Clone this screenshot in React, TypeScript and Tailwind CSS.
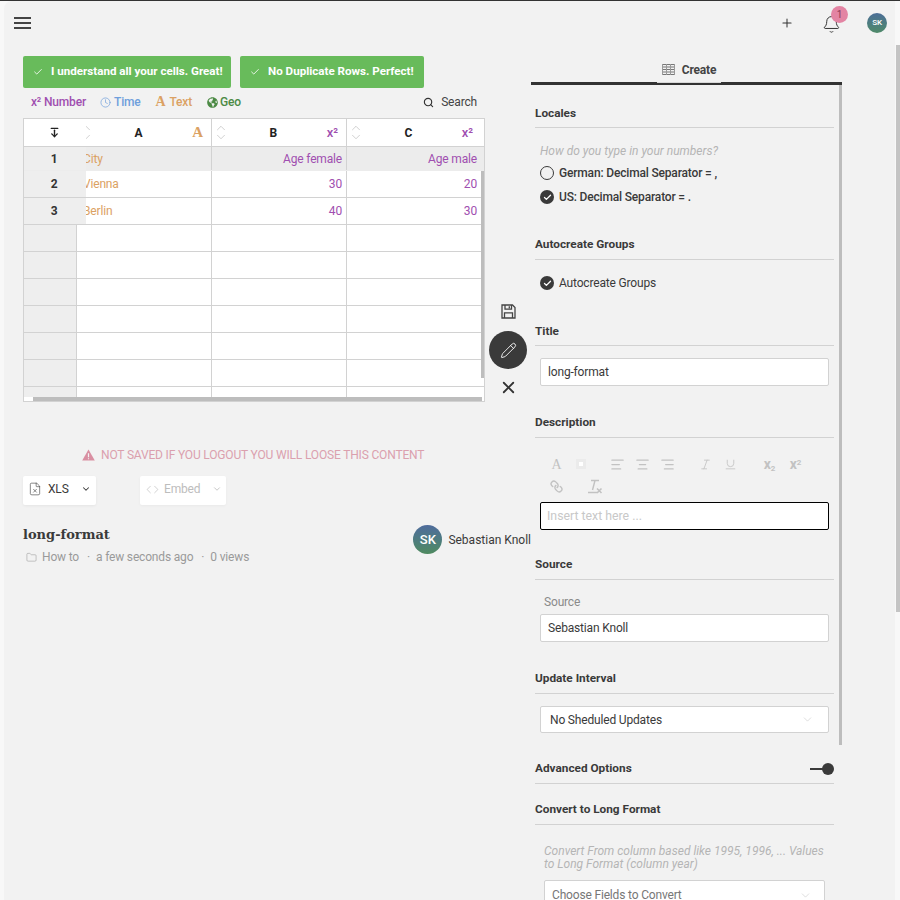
import {
  ArrowDownFromLine,
  Bell,
  Check,
  ChevronDown,
  ChevronUp,
  Clock,
  Code,
  FileX,
  Folder,
  AlignCenter,
  AlignLeft,
  AlignRight,
  Italic,
  Link,
  Pencil,
  Plus,
  Search,
  Underline,
  X,
} from "lucide-react";
import { FaGlobeAmericas } from "react-icons/fa";
import type { ReactNode } from "react";

const blankRows = [0, 1, 2, 3, 4, 5, 6];

function SerifA({ className }: { className: string }) {
  return <span className={`font-['Liberation_Serif',serif] font-bold ${className}`}>A</span>;
}

function Sq() {
  return <span className="text-[13px] font-medium">x²</span>;
}

function SortIcon({ className = "" }: { className?: string }) {
  return (
    <div className={`flex flex-col text-[#b0b0b0] ${className}`}>
      <ChevronUp size={14} strokeWidth={1} className="-mb-[5px]" />
      <ChevronDown size={14} strokeWidth={1} />
    </div>
  );
}

function Heading({ children, className = "" }: { children: ReactNode; className?: string }) {
  return (
    <div className={`h-[23px] w-[299px] border-b border-[#d2d2d2] text-[11.8px] leading-[15px] font-bold tracking-normal text-[#3a3a3a] ${className}`}>
      {children}
    </div>
  );
}

function Tick() {
  return (
    <span className="flex h-[14px] w-[14px] items-center justify-center rounded-full bg-[#3a3a3a] text-white">
      <Check size={9} strokeWidth={3.5} />
    </span>
  );
}

function ToolSlot({ children, className = "" }: { children: ReactNode; className?: string }) {
  return <span className={`flex w-[25px] items-center justify-center text-[#c2c2c2] ${className}`}>{children}</span>;
}

function GridIcon() {
  return (
    <svg width="13" height="12" viewBox="0 0 13 12" fill="none" stroke="#777" strokeWidth="1">
      <path d="M0 .5h13M0 3h13M0 5.5h13M0 8h13M0 10.5h13" />
      <path d="M.5 0v11M4.5 0v11M8.5 0v11M12.5 0v11" stroke="#999" />
    </svg>
  );
}

function ClearFormat() {
  return (
    <svg width="16" height="15" viewBox="0 0 16 15" fill="none" stroke="#c2c2c2" strokeWidth="1.4">
      <path d="M4 1.5h8M8 1.5 5.5 11M1 13.5h9" />
      <path d="M10 9.5l4.5 4.5M14.5 9.5 10 14" strokeWidth="1.6" />
    </svg>
  );
}

function WarnIcon() {
  return (
    <svg width="13" height="12" viewBox="0 0 13 12">
      <path d="M6.5.5 12.8 11.5H.2z" fill="#d98fa2" />
      <path d="M6.5 4.2v4M6.5 9.2v1.1" stroke="#f2f2f2" strokeWidth="1.2" />
    </svg>
  );
}

function SaveIcon() {
  return (
    <svg width="15" height="15" viewBox="0 0 15 15" fill="none" stroke="#444" strokeWidth="1.3">
      <path d="M1 1h10.5L14 3.5V14H1z" />
      <path d="M4 1v4.2h6.5V1M8.3 2.2v2" />
      <path d="M3.5 14V8.8h8V14" />
    </svg>
  );
}

export default function App() {
  return (
    <div className="relative h-[900px] w-[900px] overflow-hidden bg-[#f8f8f8] font-['Roboto',sans-serif] text-[12px] tracking-[-0.17px] text-[#3a3a3a]">
      <div className="h-px bg-[#333]" />
      <div className="ml-[4px] w-[891px] rounded-tl-[8px] bg-[#f2f2f2]">
        {/* top bar */}
        <header className="flex h-[44px] items-center pl-[10px]">
          <div className="flex w-[17px] flex-col gap-[3px]">
            <span className="h-[2px] bg-[#444]" />
            <span className="h-[2px] bg-[#444]" />
            <span className="h-[2px] bg-[#444]" />
          </div>
          <Plus size={14} strokeWidth={1.75} className="ml-[749px] text-[#333]" />
          <div className="relative ml-[28px] mr-[30px] mt-[2px]">
            <Bell size={19} strokeWidth={1.25} className="text-[#333]" />
            <span className="absolute -right-[7px] -top-[9px] flex h-[17px] w-[17px] items-center justify-center rounded-full bg-[#e384a3] text-[10px] text-[#8a3d58]">
              1
            </span>
          </div>
          <span className="-ml-[4px] flex h-[20px] w-[20px] items-center justify-center rounded-full bg-gradient-to-b from-[#4c6d96] to-[#4f8a68] text-[8px] font-medium text-white">
            SK
          </span>
        </header>

        <div className="flex h-[855px] overflow-hidden">
          {/* left column */}
          <main className="w-[527px] shrink-0 pl-[19px]">
            <div className="mt-[11px] flex gap-[9px] text-[11.6px] font-bold tracking-normal text-white">
              <div className="flex h-[32px] w-[208px] items-center gap-[8px] rounded-[2px] bg-[#68bb5b] pl-[10px]">
                <Check size={10} strokeWidth={2} />
                <span>I understand all your cells. Great!</span>
              </div>
              <div className="flex h-[32px] w-[184px] items-center gap-[8px] rounded-[2px] bg-[#68bb5b] pl-[10px]">
                <Check size={10} strokeWidth={2} />
                <span>No Duplicate Rows. Perfect!</span>
              </div>
            </div>

            <div className="-mt-px flex h-[30px] items-center pl-[8px] pr-[54px] font-medium">
              <span className="text-[#a04fb0]">x² Number</span>
              <span className="ml-[14px] flex items-center gap-[3px] text-[#6f9fdc]">
                <Clock size={11} strokeWidth={1.5} />
                Time
              </span>
              <span className="ml-[15px] flex items-center gap-[4px] text-[#dba163]">
                <SerifA className="text-[14px] leading-none" />
                Text
              </span>
              <span className="ml-[15px] flex items-center gap-[2px] text-[#4c8a45]">
                <FaGlobeAmericas size={11} />
                Geo
              </span>
              <Search size={11} strokeWidth={2.5} className="ml-auto text-[#333]" />
              <span className="ml-[7px] font-normal text-[#444]">Search</span>
            </div>

            <div className="mt-px flex">
              {/* sheet */}
              <div className="relative h-[284px] w-[462px] overflow-hidden border border-[#d2d2d2] bg-white">
                <div className="flex h-[28px] border-b border-[#d2d2d2] font-bold tracking-normal text-[#222]">
                  <div className="flex w-[62px] items-center justify-center pr-[2px]">
                    <ArrowDownFromLine size={11} strokeWidth={3} />
                  </div>
                  <div className="flex w-[126px] items-center overflow-hidden border-r border-[#d2d2d2] pr-[8px]">
                    <SortIcon className="-ml-[7px]" />
                    <span className="flex-1 pr-[8px] text-center">A</span>
                    <SerifA className="text-[15px] text-[#dba163]" />
                  </div>
                  <div className="flex w-[135px] items-center border-r border-[#d2d2d2] pl-[2px] pr-[8px]">
                    <SortIcon />
                    <span className="flex-1 pr-[8px] text-center">B</span>
                    <span className="text-[#a04fb0]"><Sq /></span>
                  </div>
                  <div className="flex w-[134px] items-center pl-[2px] pr-[8px]">
                    <SortIcon />
                    <span className="flex-1 pr-[8px] text-center">C</span>
                    <span className="text-[#a04fb0]"><Sq /></span>
                  </div>
                </div>
                {[
                  ["1", "City", "Age female", "Age male", "bg-[#ececec]", "h-[24px] border-[#ececec]"],
                  ["2", "Vienna", "30", "20", "bg-white", "h-[27px] border-[#d2d2d2]"],
                  ["3", "Berlin", "40", "30", "bg-white", "h-[27px] border-[#d2d2d2]"],
                ].map(([n, a, b, c, bg, h]) => (
                  <div key={n} className={`flex border-b ${bg} ${h}`}>
                    <div className="flex w-[62px] items-center justify-center bg-[#eeeeee] pr-[2px] font-bold text-[#333]">{n}</div>
                    <div className="flex w-[126px] items-center overflow-hidden border-r border-[#d2d2d2] text-[#dba163]">
                      <span className="-ml-[3px] whitespace-nowrap">{a}</span>
                    </div>
                    <div className="flex w-[135px] items-center justify-end border-r border-[#d2d2d2] pr-[4px] text-[#a04fb0]">{b}</div>
                    <div className="flex w-[134px] items-center justify-end pr-[4px] text-[#a04fb0]">{c}</div>
                  </div>
                ))}
                {blankRows.map((r) => (
                  <div key={r} className="flex h-[27px] border-b border-[#d2d2d2]">
                    <div className="w-[53px] border-r border-[#d2d2d2] bg-[#eeeeee]" />
                    <div className="w-[135px] border-r border-[#d2d2d2]" />
                    <div className="w-[135px] border-r border-[#d2d2d2]" />
                    <div className="w-[134px]" />
                  </div>
                ))}
                {/* scrollbars */}
                <div className="absolute right-0 top-[52px] h-[207px] w-[3px] bg-[#bdbdbd]" />
                <div className="absolute bottom-0 left-0 h-[4px] w-full bg-white" />
                <div className="absolute bottom-0 left-[9px] h-[4px] w-[449px] bg-[#bdbdbd]" />
              </div>

              {/* sheet actions */}
              <div className="flex w-[46px] flex-col items-center justify-end pb-[5px]">
                <SaveIcon />
                <span className="mt-[12px] flex h-[38px] w-[38px] items-center justify-center rounded-full bg-[#3a3a3a] text-white">
                  <Pencil size={17} strokeWidth={1.25} />
                </span>
                <X size={19} strokeWidth={2.25} className="mt-[9px] text-[#333]" />
              </div>
            </div>

            <div className="ml-[59px] mt-[44px] flex h-[18px] items-center gap-[6px] text-[#dba0ae]">
              <WarnIcon />
              <span>NOT SAVED IF YOU LOGOUT YOU WILL LOOSE THIS CONTENT</span>
            </div>

            <div className="mt-[12px] flex">
              <div className="flex h-[29px] w-[73px] items-center rounded-[2px] bg-white pb-[3px] pl-[5px] shadow-[0_1px_3px_rgba(0,0,0,0.06)]">
                <FileX size={14} strokeWidth={1} className="text-[#333]" />
                <span className="ml-[6px]">XLS</span>
                <ChevronDown size={10} strokeWidth={2.5} className="ml-[12px]" />
              </div>
              <div className="ml-[44px] flex h-[29px] w-[86px] items-center rounded-[2px] bg-white pb-[3px] pl-[6px] text-[#bdbdbd] shadow-[0_1px_3px_rgba(0,0,0,0.04)]">
                <Code size={13} strokeWidth={1.25} />
                <span className="ml-[5px]">Embed</span>
                <ChevronDown size={10} strokeWidth={2} className="ml-[12px]" />
              </div>
            </div>

            <div className="mt-[16px] flex w-[508px] justify-between">
              <div>
                <h1 className="pt-px font-['DejaVu_Serif',serif] text-[13px] leading-[26px] font-bold tracking-normal text-[#3a3a3a]">long-format</h1>
                <div className="flex items-center pl-[3px] text-[#9a9a9a]">
                  <Folder size={11} strokeWidth={1.25} />
                  <span className="ml-[5px]">How to</span>
                  <span className="ml-[8px]">·</span>
                  <span className="ml-[6px]">a few seconds ago</span>
                  <span className="ml-[8px]">·</span>
                  <span className="ml-[6px]">0 views</span>
                </div>
              </div>
              <div className="mt-[4px] flex h-[29px] items-center gap-[6px] tracking-normal">
                <span className="flex h-[29px] w-[29px] items-center justify-center rounded-full bg-gradient-to-b from-[#4f6b9c] to-[#4f8a5f] text-[13px] font-medium text-white">SK</span>
                <span className="whitespace-nowrap">Sebastian Knoll</span>
              </div>
            </div>
          </main>

          {/* right panel */}
          <aside className="relative w-[311px] shrink-0">
            <div className="mt-[15px] flex h-[22px] justify-center">
              <div className="ml-[5px] flex h-[23px] w-[64px] items-center justify-center gap-[7px] border-b border-[#d8d8d8] pb-[3px] font-bold text-[#444]">
                <GridIcon />
                Create
              </div>
            </div>
            <div className="h-[3px] bg-[#333]" />
            <div className="absolute right-0 top-[40px] h-[660px] w-[3px] bg-[#bdbdbd]" />

            <div className="pl-[4px]">
              <Heading className="mt-[20px] pt-px">Locales</Heading>
              <p className="ml-[5px] mt-[15px] leading-[16px] tracking-normal text-[#b5b5b5] italic">How do you type in your numbers?</p>
              <div className="ml-[5px] mt-[2px] flex h-[24px] items-center gap-[5px] font-medium">
                <span className="h-[14px] w-[14px] rounded-full border border-[#3a3a3a]" />
                German: Decimal Separator = ,
              </div>
              <div className="ml-[5px] flex h-[24px] items-center gap-[5px] font-medium">
                <Tick />
                US: Decimal Separator = .
              </div>

              <Heading className="mt-[28px]">Autocreate Groups</Heading>
              <div className="ml-[5px] mt-[11px] flex h-[24px] items-center gap-[5px]">
                <Tick />
                Autocreate Groups
              </div>

              <Heading className="mt-[28px] pt-px">Title</Heading>
              <div className="ml-[5px] mt-[12px] flex h-[28px] w-[289px] items-center rounded-[2px] border border-[#d2d2d2] bg-white pl-[7px]">long-format</div>

              <Heading className="mt-[29px]">Description</Heading>
              <div className="mt-[15px] flex h-[22px] items-center pl-[9px]">
                <ToolSlot><SerifA className="text-[14px] font-normal" /></ToolSlot>
                <ToolSlot className="-ml-[1px]">
                  <span className="flex h-[10px] w-[10px] items-center justify-center bg-[#ebebeb]">
                    <span className="h-[4px] w-[4px] bg-white" />
                  </span>
                </ToolSlot>
                <ToolSlot className="ml-[12px]"><AlignLeft size={15} strokeWidth={2} /></ToolSlot>
                <ToolSlot><AlignCenter size={15} strokeWidth={2} /></ToolSlot>
                <ToolSlot><AlignRight size={15} strokeWidth={2} /></ToolSlot>
                <ToolSlot className="ml-[13px]"><Italic size={13} strokeWidth={1.5} /></ToolSlot>
                <ToolSlot><Underline size={13} strokeWidth={1.5} /></ToolSlot>
                <ToolSlot className="ml-[14px] font-bold text-[#777]">
                  <span className="text-[14px] leading-none">x<sub className="text-[8px]">2</sub></span>
                </ToolSlot>
                <ToolSlot className="ml-[1px] font-bold text-[#777]">
                  <span className="text-[14px] leading-none">x<sup className="text-[8px]">2</sup></span>
                </ToolSlot>
              </div>
              <div className="flex h-[22px] items-center pl-[9px]">
                <ToolSlot><Link size={13} strokeWidth={2.5} className="rotate-90" /></ToolSlot>
                <ToolSlot className="ml-[13px]"><ClearFormat /></ToolSlot>
              </div>
              <div className="ml-[5px] mt-[5px] flex h-[28px] w-[289px] items-center rounded-[2px] border border-black bg-white pl-[6px] text-[12.3px] tracking-normal text-[#c8c8c8]">Insert text here ...</div>

              <Heading className="mt-[27px]">Source</Heading>
              <div className="ml-[9px] mt-[14px] leading-[16px] text-[#8a8a8a]">Source</div>
              <div className="ml-[5px] mt-[4px] flex h-[28px] w-[289px] items-center rounded-[2px] border border-[#d2d2d2] bg-white pl-[7px]">Sebastian Knoll</div>

              <Heading className="mt-[29px]">Update Interval</Heading>
              <div className="ml-[5px] mt-[12px] flex h-[27px] w-[289px] items-center justify-between rounded-[2px] border border-[#d2d2d2] bg-white pl-[9px] pr-[14px]">
                No Sheduled Updates
                <ChevronDown size={13} strokeWidth={1} className="text-[#c4c4c4]" />
              </div>

              <Heading className="mt-[28px] flex justify-between">
                Advanced Options
                <span className="flex h-[16px] items-center">
                  <span className="h-[2px] w-[14px] bg-[#3a3a3a]" />
                  <span className="-ml-[2px] h-[12px] w-[12px] rounded-full bg-[#3a3a3a]" />
                </span>
              </Heading>

              <Heading className="mt-[18px]">Convert to Long Format</Heading>
              <p className="ml-[9px] mt-[20px] w-[285px] leading-[13px] tracking-normal text-[#b5b5b5] italic">
                Convert From column based like 1995, 1996, ... Values to Long Format (column year)
              </p>
              <div className="ml-[9px] mt-[9px] flex h-[30px] w-[281px] items-center justify-between rounded-[2px] border border-[#d2d2d2] bg-white pl-[7px] pr-[12px] text-[#777]">
                Choose Fields to Convert
                <ChevronDown size={13} strokeWidth={1} className="text-[#c4c4c4]" />
              </div>
            </div>
          </aside>
        </div>
      </div>
      {/* page scrollbar */}
      <div className="absolute right-0 top-[45px] h-[567px] w-[4px] bg-[#c4c4c4]" />
    </div>
  );
}
